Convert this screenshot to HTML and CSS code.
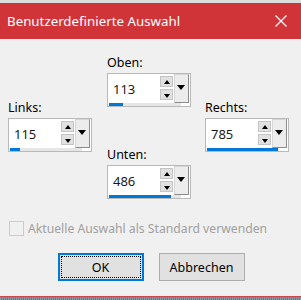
FILE: index.html
```html
<!DOCTYPE html>
<html lang="de">
<head>
  <meta charset="UTF-8">
  <title>Benutzerdefinierte Auswahl</title>
  <link rel="stylesheet" href="styles.css">
</head>
<body>
  <div class="window">
    <div class="titlebar">
      <span class="title">Benutzerdefinierte Auswahl</span>
      <svg class="close" width="12" height="12" viewBox="0 0 12 12">
        <path d="M0.5 0.5 L11.5 11.5 M11.5 0.5 L0.5 11.5" stroke="#fff" stroke-width="1.2"/>
      </svg>
    </div>

    <div class="content">
      <div class="fields">
        <div class="col side">
          <div class="label">Links:</div>
          <div class="spin">
            <div class="row">
              <span class="value">115</span>
              <div class="arrows">
                <div class="arrow up"></div>
                <div class="arrow down"></div>
              </div>
              <div class="drop"></div>
            </div>
            <div class="track"><div class="bar" style="width:10px"></div></div>
          </div>
        </div>

        <div class="col middle">
          <div class="group">
            <div class="label">Oben:</div>
            <div class="spin">
              <div class="row">
                <span class="value">113</span>
                <div class="arrows">
                  <div class="arrow up"></div>
                  <div class="arrow down"></div>
                </div>
                <div class="drop"></div>
              </div>
              <div class="track"><div class="bar" style="width:14px"></div></div>
            </div>
          </div>
          <div class="group lower">
            <div class="label">Unten:</div>
            <div class="spin">
              <div class="row">
                <span class="value">486</span>
                <div class="arrows">
                  <div class="arrow up"></div>
                  <div class="arrow down"></div>
                </div>
                <div class="drop"></div>
              </div>
              <div class="track"><div class="bar" style="width:62px"></div></div>
            </div>
          </div>
        </div>

        <div class="col side">
          <div class="label">Rechts:</div>
          <div class="spin">
            <div class="row">
              <span class="value">785</span>
              <div class="arrows">
                <div class="arrow up"></div>
                <div class="arrow down"></div>
              </div>
              <div class="drop"></div>
            </div>
            <div class="track"><div class="bar" style="width:71px"></div></div>
          </div>
        </div>
      </div>

      <label class="check">
        <span class="box"></span>
        <span>Aktuelle Auswahl als Standard verwenden</span>
      </label>

      <div class="buttons">
        <button class="btn default"><span class="focus">OK</span></button>
        <button class="btn">Abbrechen</button>
      </div>
    </div>
    <div class="bottom"></div>
  </div>
</body>
</html>
```

FILE: styles.css
```css
* {
  margin: 0;
  padding: 0;
  box-sizing: border-box;
}
body {
  background: #f0f0f0;
  font-family: 'Noto Sans', sans-serif;
  color: #000;
  overflow: hidden;
}
.window {
  width: 301px;
  height: 300px;
  display: flex;
  flex-direction: column;
  border-top: 3px solid #dcdcdc;
}
.titlebar {
  height: 36px;
  background: #d13438;
  color: #fff;
  display: flex;
  align-items: center;
  justify-content: space-between;
  padding: 0 14px 0 7px;
}
.title {
  font-size: 13.3px;
}
.content {
  flex: 1;
  display: flex;
  flex-direction: column;
}
.fields {
  display: flex;
  gap: 14px;
  padding: 0 8px;
}
.col {
  width: 84px;
}
.side {
  padding-top: 61px;
}
.middle {
  padding-top: 16px;
  margin-left: 1px;
}
.lower {
  margin-top: 40px;
}
.label {
  font-size: 12.5px;
  height: 16px;
  line-height: 16px;
  margin-bottom: 2px;
}
.spin {
  height: 34px;
  background: #fff;
  border: 1px solid #b9b9b9;
  display: flex;
  flex-direction: column;
  padding: 0 1px 0 1px;
}
.row {
  height: 28px;
  display: flex;
  align-items: flex-start;
}
.value {
  flex: 1;
  min-width: 0;
  font-size: 13px;
  padding: 7px 0 0 4px;
  line-height: 16px;
  color: #1a1a1a;
}
.track {
  height: 3px;
  margin-top: 1px;
  background: #e6e6e6;
  margin-right: 8px;
}
.bar {
  height: 3px;
  background: #0078d7;
}
.arrows {
  width: 13px;
  padding-top: 2px;
  display: flex;
  flex-direction: column;
  gap: 2px;
}
.arrow {
  width: 13px;
  height: 11px;
  background: #e1e1e1;
  border: 1px solid #c4c4c4;
  position: relative;
}
.arrow::after {
  content: '';
  position: absolute;
  left: 2.5px;
  border-left: 3.5px solid transparent;
  border-right: 3.5px solid transparent;
}
.up::after {
  top: 2.5px;
  border-bottom: 4px solid #000;
}
.down::after {
  top: 3.5px;
  border-top: 4px solid #000;
}
.drop {
  width: 15px;
  height: 29px;
  margin-left: 1px;
  background: #ececec;
  border: 1px solid #d6d6d6;
  border-right-color: #8c8c8c;
  border-bottom-color: #8c8c8c;
  position: relative;
}
.drop::after {
  content: '';
  position: absolute;
  top: 10px;
  left: 2px;
  border-left: 4.5px solid transparent;
  border-right: 4.5px solid transparent;
  border-top: 5px solid #000;
}
.check {
  display: flex;
  align-items: center;
  gap: 4px;
  margin: 21px 0 0 9px;
  font-size: 12.2px;
  color: #a0a0a0;
}
.check .box {
  width: 15px;
  height: 15px;
  border: 1px solid #cccccc;
  background: #f0f0f0;
}
.buttons {
  display: flex;
  justify-content: center;
  gap: 15px;
  margin-top: 16px;
  padding-left: 1px;
}
.btn {
  width: 86px;
  height: 28px;
  background: #e1e1e1;
  border: 1px solid #adadad;
  font-family: 'Noto Sans', sans-serif;
  font-size: 12.5px;
  color: #000;
}
.btn.default {
  border: 2px solid #0078d7;
  padding: 1px;
}
.focus {
  display: flex;
  align-items: center;
  justify-content: center;
  height: 100%;
  border: 1px dotted #000;
}
.bottom {
  height: 4px;
  border-top: 1px solid #c8474b;
  background: repeating-linear-gradient(90deg, #8a97a6 0 1px, #6f7b8a 1px 2px);
}
```
